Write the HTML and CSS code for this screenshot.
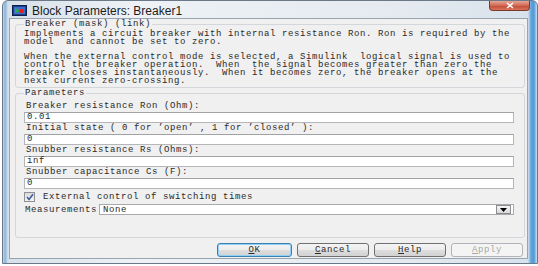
FILE: index.html
```html
<!DOCTYPE html>
<html lang="en">
  <head>
    <meta charset="UTF-8" />
    <title>Block Parameters: Breaker1</title>
    <link rel="stylesheet" href="styles.css">
  </head>
  <body>
    <div class="window">
      <div class="titlebar">
        <svg class="app-icon" width="15" height="11" viewBox="0 0 15 11">
          <rect x="0.5" y="0.5" width="14" height="10" fill="#1d3f8a" stroke="#0d1f4a" />
          <rect x="2" y="2" width="11" height="7" fill="#3b6fd0" />
          <path d="M3 3 L9 6 L3 8 Z" fill="#2aa84a" />
          <circle cx="9.5" cy="6" r="2.3" fill="#e02020" />
        </svg>
        <span class="title">Block Parameters: Breaker1</span>
        <div class="close-btn">
          <svg width="10" height="7" viewBox="0 0 10 7">
            <path d="M2 1 L8 6 M8 1 L2 6" stroke="#fff" stroke-width="1.6" />
          </svg>
        </div>
      </div>

      <div class="client">
        <!-- mask description -->
        <fieldset class="group desc">
          <legend>Breaker (mask) (link)</legend>
          <p>Implements a circuit breaker with internal resistance Ron. Ron is required by the
model  and cannot be set to zero.</p>
          <p>When the external control mode is selected, a Simulink  logical signal is used to
control the breaker operation.  When  the signal becomes greater than zero the
breaker closes instantaneously.  When it becomes zero, the breaker opens at the
next current zero-crossing.</p>
        </fieldset>

        <!-- parameters -->
        <fieldset class="group params">
          <legend>Parameters</legend>
          <div class="param-label">Breaker resistance Ron (Ohm):</div>
          <div class="field">0.01</div>
          <div class="param-label">Initial state ( 0 for ’open’ , 1 for ’closed’ ):</div>
          <div class="field">0</div>
          <div class="param-label">Snubber resistance Rs (Ohms):</div>
          <div class="field">inf</div>
          <div class="param-label">Snubber capacitance Cs (F):</div>
          <div class="field">0</div>
          <div class="check-row">
            <span class="checkbox">
              <svg width="8" height="8" viewBox="0 0 8 8">
                <path d="M1 4 L3 6.5 L7 1.2" fill="none" stroke="#3d5a9e" stroke-width="1.5" />
              </svg>
            </span>
            <span>External control of switching times</span>
          </div>
          <div class="select-row">
            <span class="select-label">Measurements</span>
            <div class="select">
              <span>None</span>
              <span class="drop-btn">
                <svg width="7" height="4" viewBox="0 0 7 4"><path d="M0 0 H7 L3.5 4 Z" fill="#000" /></svg>
              </span>
            </div>
          </div>
        </fieldset>

        <div class="buttons">
          <button class="btn btn-ok"><u>O</u>K</button>
          <button class="btn"><u>C</u>ancel</button>
          <button class="btn"><u>H</u>elp</button>
          <button class="btn btn-disabled"><u>A</u>pply</button>
        </div>
      </div>
    </div>
  </body>
</html>
```

FILE: styles.css
```css
body {
  margin: 0;
  background: #ffffff;
  font-family: "Liberation Mono", "Courier New", monospace;
}
.window {
  box-sizing: border-box;
  width: 536px;
  margin-left: 2px;
  padding-bottom: 4px;
  border: 1px solid #6a7888;
  border-radius: 6px 6px 0 0;
  background: linear-gradient(
    to right,
    #c8d8e8 0px,
    #86b4dc 2px,
    #d6e0ea 5px,
    #eef2f6 25%,
    #e4eaf0 75%,
    #d8e2ec calc(100% - 9px),
    #5ea5dd calc(100% - 6px),
    #4f9ad8 calc(100% - 3px),
    #d2e0ee 100%
  );
}
.titlebar {
  display: flex;
  align-items: center;
  height: 17px;
  padding-left: 9px;
}
.app-icon {
  margin-right: 5px;
  margin-top: 1px;
}
.title {
  font-family: "Liberation Sans", Arial, sans-serif;
  font-size: 12px;
  color: #1c1c1c;
  margin-top: 2px;
}
.close-btn {
  align-self: flex-start;
  margin-left: auto;
  margin-right: 7px;
  width: 41px;
  height: 10px;
  display: flex;
  align-items: center;
  justify-content: center;
  box-sizing: border-box;
  border: 1px solid #7a3a2e;
  border-top: none;
  border-radius: 0 0 4px 4px;
  background: linear-gradient(#e8a696, #d06a54 50%, #c04a34 51%, #d8745c);
}
.client {
  margin: 0 9px 0 6px;
  padding: 0 2px 1px 5px;
  border: 1px solid #98a4b0;
  background: #f0f0f0;
  color: #2a2a2a;
  font-size: 9px;
  letter-spacing: 0.6px;
}
.group {
  margin: 0;
  min-width: 0;
  border: 1px solid #d3d6da;
  border-radius: 3px;
}
.group legend {
  padding: 0 1px;
  line-height: 10px;
}
.desc {
  padding: 1px 8px 2px 8px;
}
.desc p {
  margin: 0;
  white-space: pre;
  line-height: 8px;
}
.desc p + p {
  margin-top: 7px;
}
.params {
  padding: 3px 10px 22px 8px;
}
.param-label {
  height: 11px;
  line-height: 11px;
  padding-left: 2px;
  white-space: pre;
}
.field {
  box-sizing: border-box;
  height: 11px;
  line-height: 9px;
  padding-left: 2px;
  border: 1px solid #b4b6ba;
  border-top-color: #a0a2a6;
  background: #ffffff;
}
.check-row {
  display: flex;
  align-items: center;
  height: 15px;
}
.checkbox {
  box-sizing: border-box;
  width: 11px;
  height: 10px;
  margin-right: 8px;
  display: flex;
  align-items: center;
  justify-content: center;
  border: 1px solid #8e9094;
  background: linear-gradient(#d8dadc, #f4f4f4);
}
.select-row {
  display: flex;
  align-items: center;
  height: 11px;
}
.select-label {
  flex: none;
  width: 74px;
  padding-left: 1px;
}
.select {
  flex: 1;
  box-sizing: border-box;
  height: 11px;
  display: flex;
  align-items: center;
  justify-content: space-between;
  padding: 0 2px 0 3px;
  border: 1px solid #a8aaae;
  background: #ffffff;
}
.drop-btn {
  box-sizing: border-box;
  width: 15px;
  height: 9px;
  display: flex;
  align-items: center;
  justify-content: center;
  border: 1px solid #8a8c90;
  background: linear-gradient(#f6f6f6, #d8d8d8);
}
.buttons {
  display: flex;
  justify-content: flex-end;
  gap: 5px;
  margin-top: 5px;
  margin-right: 2px;
}
.btn {
  box-sizing: border-box;
  width: 72px;
  height: 14px;
  padding: 0;
  border: 1px solid #707070;
  border-radius: 3px;
  background: linear-gradient(#f4f4f4 0, #ececec 50%, #dedede 51%, #d2d2d2 100%);
  font-family: "Liberation Mono", "Courier New", monospace;
  font-size: 9px;
  letter-spacing: 0.6px;
  line-height: 12px;
  color: #2a2a2a;
}
.btn-ok {
  width: 75px;
  border-color: #3c7fb1;
  box-shadow: inset 0 0 0 1px #8fd0f4;
}
.btn-disabled {
  border-color: #b0b4b8;
  background: #f4f4f4;
  color: #a8a8a8;
}
```
